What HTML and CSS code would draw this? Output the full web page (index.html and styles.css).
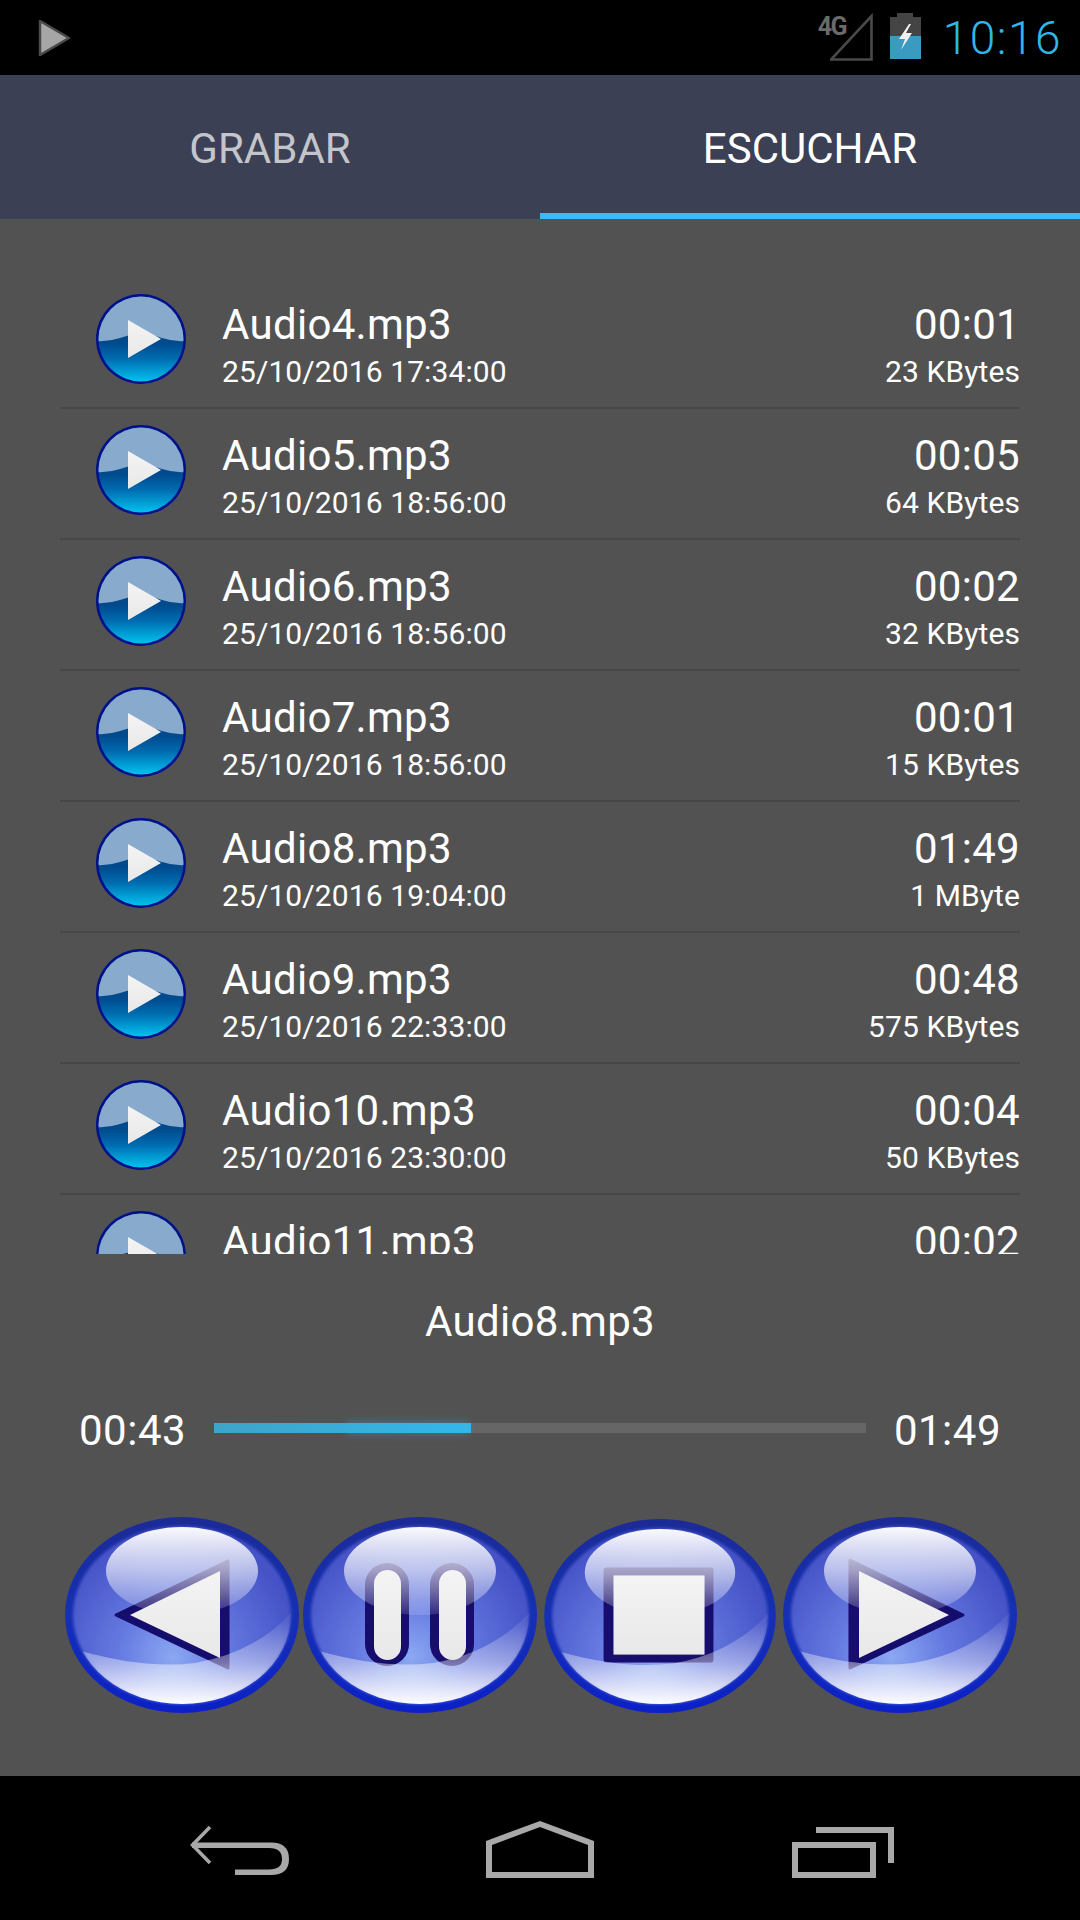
FILE: index.html
```html
<!DOCTYPE html>
<html lang="es">
<head>
<meta charset="utf-8">
<title>Audio</title>
<link rel="stylesheet" href="styles.css">
</head>
<body>
<svg class="defs" aria-hidden="true">
  <defs>
    <filter id="soft" x="-5%" y="-5%" width="110%" height="110%"><feGaussianBlur stdDeviation="1.6"/></filter>
    <filter id="soft2" x="-10%" y="-10%" width="120%" height="120%"><feGaussianBlur stdDeviation=".7"/></filter>
    <linearGradient id="ring" x1="0" y1="0" x2="0" y2="1">
      <stop offset="0" stop-color="#1b2a96"/><stop offset=".5" stop-color="#1530b4"/><stop offset="1" stop-color="#0b20c6"/>
    </linearGradient>
    <radialGradient id="body" gradientUnits="userSpaceOnUse" cx="108" cy="140" r="125">
      <stop offset="0" stop-color="#8ba8f2"/><stop offset=".45" stop-color="#6478e0"/><stop offset="1" stop-color="#4553c6"/>
    </radialGradient>
    <linearGradient id="gloss" gradientUnits="userSpaceOnUse" x1="0" y1="10" x2="0" y2="98">
      <stop offset="0" stop-color="#fff" stop-opacity=".97"/><stop offset=".5" stop-color="#fff" stop-opacity=".6"/><stop offset="1" stop-color="#fff" stop-opacity=".12"/>
    </linearGradient>
    <linearGradient id="cres" gradientUnits="userSpaceOnUse" x1="0" y1="105" x2="0" y2="186">
      <stop offset="0" stop-color="#fff" stop-opacity=".08"/><stop offset=".5" stop-color="#fff" stop-opacity=".42"/><stop offset="1" stop-color="#fff" stop-opacity=".98"/>
    </linearGradient>
    <linearGradient id="face" x1="0" y1="0" x2="0" y2="1">
      <stop offset="0" stop-color="#f4f4f4"/><stop offset="1" stop-color="#e8e8e8"/>
    </linearGradient>
    <linearGradient id="deep" x1="0" y1="0" x2="0" y2="1">
      <stop offset="0" stop-color="#004080"/><stop offset=".55" stop-color="#004a8e"/><stop offset=".72" stop-color="#006cb0"/><stop offset="1" stop-color="#00ccf6"/>
    </linearGradient>
    <clipPath id="inner"><ellipse cx="117" cy="98" rx="109" ry="89"/></clipPath>
    <clipPath id="disc"><circle cx="45" cy="45" r="42.500"/></clipPath>
    <g id="btn-base">
      <ellipse cx="117" cy="98" rx="117" ry="98" fill="url(#ring)"/>
      <ellipse cx="117" cy="98" rx="109" ry="89" fill="url(#body)" filter="url(#soft)"/>
    </g>
    <g id="btn-gloss">
      <ellipse cx="117" cy="54" rx="76" ry="44" fill="url(#gloss)"/>
      <path clip-path="url(#inner)" d="M16 134Q80 152 130 146Q190 136 228 94L234 196H0Z" fill="url(#cres)"/>
    </g>
    <symbol id="mini" viewBox="0 0 90 90">
      <circle cx="45" cy="45" r="45" fill="#00108c"/>
      <g clip-path="url(#disc)">
        <rect width="90" height="90" fill="url(#deep)"/>
        <path d="M0 0H90V47Q78 48 66 44Q55 40 45 39Q35 40 24 44Q12 48 0 47Z" fill="#88aacd"/>
      </g>
      <path d="M32 26L65 45L32 64Z" fill="url(#face)"/>
    </symbol>
  </defs>
</svg>

<div class="app">
  <header class="status">
    <svg class="note" viewBox="0 0 33 36"><path d="M2 1L31 18L2 35Z" fill="#a6a6a6" stroke="#4a4a4a" stroke-width="2.5" stroke-linejoin="round"/></svg>
    <div class="status-right">
      <div class="signal">
        <span class="net">4G</span>
        <svg class="bars" viewBox="0 0 44 50"><path d="M41.500 4V47.500H1Z" fill="none" stroke="#4a4a4a" stroke-width="2.600"/></svg>
      </div>
      <svg class="battery" viewBox="0 0 31 46">
        <path d="M7 0H23V4H31V23H0V4H7Z" fill="#444"/>
        <path d="M0 23H31V46H0Z" fill="#3a9abf"/>
        <path d="M19 11L9 26H15L11 37L22 20H16L21 11Z" fill="#f0f0f0"/>
      </svg>
      <span class="clock">10:16</span>
    </div>
  </header>

  <nav class="tabs">
    <div class="tab">GRABAR</div>
    <div class="tab tab-active">ESCUCHAR</div>
  </nav>

  <main class="content">
    <section class="list">
      <div class="row"><svg class="mini"><use href="#mini"/></svg><div class="meta"><div class="big">Audio4.mp3</div><div class="small">25/10/2016 17:34:00</div></div><div class="meta right"><div class="big">00:01</div><div class="small">23 KBytes</div></div></div>
      <div class="row"><svg class="mini"><use href="#mini"/></svg><div class="meta"><div class="big">Audio5.mp3</div><div class="small">25/10/2016 18:56:00</div></div><div class="meta right"><div class="big">00:05</div><div class="small">64 KBytes</div></div></div>
      <div class="row"><svg class="mini"><use href="#mini"/></svg><div class="meta"><div class="big">Audio6.mp3</div><div class="small">25/10/2016 18:56:00</div></div><div class="meta right"><div class="big">00:02</div><div class="small">32 KBytes</div></div></div>
      <div class="row"><svg class="mini"><use href="#mini"/></svg><div class="meta"><div class="big">Audio7.mp3</div><div class="small">25/10/2016 18:56:00</div></div><div class="meta right"><div class="big">00:01</div><div class="small">15 KBytes</div></div></div>
      <div class="row"><svg class="mini"><use href="#mini"/></svg><div class="meta"><div class="big">Audio8.mp3</div><div class="small">25/10/2016 19:04:00</div></div><div class="meta right"><div class="big">01:49</div><div class="small">1 MByte</div></div></div>
      <div class="row"><svg class="mini"><use href="#mini"/></svg><div class="meta"><div class="big">Audio9.mp3</div><div class="small">25/10/2016 22:33:00</div></div><div class="meta right"><div class="big">00:48</div><div class="small">575 KBytes</div></div></div>
      <div class="row"><svg class="mini"><use href="#mini"/></svg><div class="meta"><div class="big">Audio10.mp3</div><div class="small">25/10/2016 23:30:00</div></div><div class="meta right"><div class="big">00:04</div><div class="small">50 KBytes</div></div></div>
      <div class="row"><svg class="mini"><use href="#mini"/></svg><div class="meta"><div class="big">Audio11.mp3</div><div class="small"></div></div><div class="meta right"><div class="big">00:02</div><div class="small"></div></div></div>
    </section>

    <div class="now">Audio8.mp3</div>

    <div class="progress">
      <span class="time">00:43</span>
      <div class="track"><div class="fill"></div></div>
      <span class="time">01:49</span>
    </div>

    <div class="controls">
      <svg class="ctl ctl-first" viewBox="0 0 234 196">
        <use href="#btn-base"/>
        <path d="M51 98L163 44V151Z" fill="#12086c" stroke="#12086c" stroke-width="3" stroke-linejoin="round" filter="url(#soft2)"/>
        <use href="#btn-gloss"/>
        <path d="M65 98L155 54V141Z" fill="url(#face)"/>
      </svg>
      <svg class="ctl" viewBox="0 0 234 196">
        <use href="#btn-base"/>
        <g filter="url(#soft2)">
          <rect x="62" y="46" width="44" height="103" rx="22" fill="#12086c"/>
          <rect x="127" y="46" width="44" height="103" rx="22" fill="#12086c"/>
        </g>
        <use href="#btn-gloss"/>
        <rect x="71" y="53" width="27" height="90" rx="13.500" fill="url(#face)"/>
        <rect x="136" y="53" width="27" height="90" rx="13.500" fill="url(#face)"/>
      </svg>
      <svg class="ctl ctl-stop" viewBox="0 0 234 196">
        <use href="#btn-base"/>
        <rect x="60" y="49" width="111" height="96" rx="3" fill="#12086c" filter="url(#soft2)"/>
        <use href="#btn-gloss"/>
        <rect x="70" y="57" width="92" height="80" fill="url(#face)"/>
      </svg>
      <svg class="ctl" viewBox="0 0 234 196">
        <use href="#btn-base"/>
        <path d="M67 43L180 98L67 151Z" fill="#12086c" stroke="#12086c" stroke-width="3" stroke-linejoin="round" filter="url(#soft2)"/>
        <use href="#btn-gloss"/>
        <path d="M76 54L166 98L76 141Z" fill="url(#face)"/>
      </svg>
    </div>
  </main>

  <footer class="nav">
    <svg class="nav-back" viewBox="0 0 100 57">
      <path d="M21 6L3.500 24L21 42" fill="none" stroke="#a8a8a8" stroke-width="3.500"/>
      <path d="M3 21.500H82Q100 21.500 100 38Q100 54 82 54H46V48.500H80Q93 48.500 93 38Q93 27 80 27H3Z" fill="#a8a8a8"/>
    </svg>
    <svg class="nav-home" viewBox="0 0 108 57">
      <path fill-rule="evenodd" d="M54 0L108 20V57H0V20ZM54 6L6 24V51H102V24Z" fill="#a8a8a8"/>
    </svg>
    <svg class="nav-recent" viewBox="0 0 102 57">
      <path fill-rule="evenodd" d="M0 21H84V57H0ZM6 27V51H78V27Z" fill="#a8a8a8"/>
      <path d="M24 6H102V42H96V12H24Z" fill="#a8a8a8"/>
    </svg>
  </footer>
</div>
</body>
</html>
```
FILE: styles.css
```css
* { box-sizing: border-box; }
html, body { margin: 0; padding: 0; }
body { width: 1080px; height: 1920px; overflow: hidden; background: #000; font-family: Roboto, "Liberation Sans", sans-serif; color: #fff; }
.defs { position: absolute; width: 0; height: 0; overflow: hidden; }
.app { display: flex; flex-direction: column; height: 1920px; }

.status { height: 75px; background: #000; display: flex; align-items: flex-start; justify-content: space-between; padding: 20px 18px 0 38px; }
.note { width: 33px; height: 36px; display: block; }
.status-right { display: flex; align-items: flex-start; margin-top: -7px; }
.signal { width: 55px; height: 48px; display: flex; align-items: flex-start; margin-right: 19px; }
.net { font-size: 25px; line-height: 26px; font-weight: 700; color: #6a6a6a; width: 29px; margin: 1px 0 0 2px; letter-spacing: -1.5px; flex: none; }
.bars { width: 44px; height: 50px; margin-left: -17px; margin-top: -1px; flex: none; display: block; }
.battery { width: 31px; height: 46px; display: block; margin-right: 22px; flex: none; }
.clock { font-size: 46px; line-height: 46px; font-weight: 300; color: #33b5e5; margin-top: 2px; letter-spacing: 1.5px; }

.tabs { height: 144px; display: flex; background: #3c4055; }
.tab { flex: 1; display: flex; align-items: center; justify-content: center; font-size: 42px; color: #c4c5ca; padding-top: 3px; }
.tab-active { color: #fff; box-shadow: inset 0 -6px 0 #3cb9fb; }

.content { flex: 1; background: #525252; display: flex; flex-direction: column; padding-top: 59px; }
.list { height: 976px; margin: 0 60px; overflow: hidden; flex: none; }
.row { height: 131px; display: flex; align-items: center; padding: 0 0 8px 36px; border-bottom: 2px solid #474747; flex: none; }
.mini { width: 90px; height: 90px; display: block; flex: none; margin-right: 36px; }
.meta { display: flex; flex-direction: column; flex: 1; padding-top: 16px; }
.right { align-items: flex-end; }
.big { font-size: 42px; line-height: 50px; letter-spacing: .3px; }
.small { font-size: 30px; line-height: 44px; min-height: 44px; letter-spacing: .1px; }

.now { font-size: 42px; line-height: 46px; text-align: center; letter-spacing: .3px; margin-top: 45px; }
.progress { display: flex; align-items: center; padding: 0 79px; margin-top: 60px; height: 46px; }
.time { font-size: 42px; line-height: 46px; letter-spacing: .5px; padding-top: 5px; flex: none; }
.track { flex: 1; height: 10px; margin: 0 28px; background: #666; }
.fill { position: relative; height: 100%; width: 257px; background: linear-gradient(90deg, #3ea4c9, #33b8ea); }
.fill::after { content: ""; position: absolute; top: 0; bottom: 0; right: 4px; width: 120px; box-shadow: 0 0 9px 1px rgba(51,181,229,.35); }

.controls { display: flex; align-items: flex-end; padding-left: 65px; margin-top: 66px; }
.ctl { width: 234px; height: 196px; display: block; flex: none; margin-right: 7px; }
.ctl-first { margin-right: 4px; }
.ctl-stop { width: 232px; height: 194px; }

.nav { height: 144px; background: #000; display: flex; align-items: flex-start; padding: 45px 0 0 189px; flex: none; }
.nav-back { width: 100px; height: 57px; display: block; flex: none; margin-right: 197px; }
.nav-home { width: 108px; height: 57px; display: block; flex: none; margin-right: 198px; }
.nav-recent { width: 102px; height: 57px; display: block; flex: none; }
```
